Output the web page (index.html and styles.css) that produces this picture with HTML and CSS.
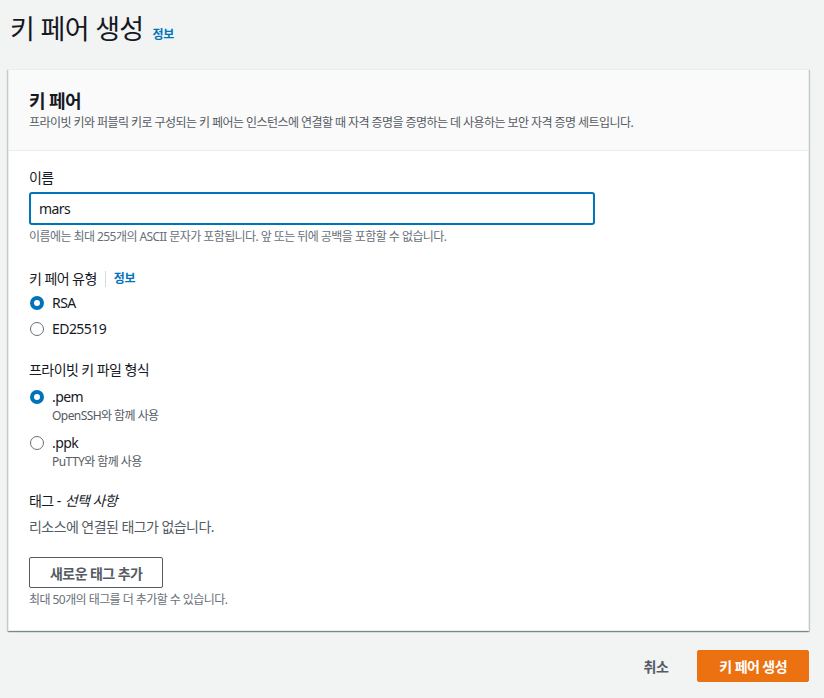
FILE: index.html
```html
<!DOCTYPE html>
<html lang="ko">
<head>
<meta charset="utf-8">
<link rel="stylesheet" href="styles.css">
</head>
<body>
<div class="page">
  <h1 class="page-title">키 페어 생성 <a class="info" href="#">정보</a></h1>
  <div class="card">
    <div class="card-header">
      <h2 class="card-title">키 페어</h2>
      <p class="card-desc">프라이빗 키와 퍼블릭 키로 구성되는 키 페어는 인스턴스에 연결할 때 자격 증명을 증명하는 데 사용하는 보안 자격 증명 세트입니다.</p>
    </div>
    <div class="card-body">
      <div class="field">
        <div class="label">이름</div>
        <div class="input">mars</div>
        <div class="hint">이름에는 최대 255개의 ASCII 문자가 포함됩니다. 앞 또는 뒤에 공백을 포함할 수 없습니다.</div>
      </div>
      <div class="field type-field">
        <div class="label">키 페어 유형<span class="sep"></span><a class="info" href="#">정보</a></div>
        <div class="radio-group">
          <div class="radio"><span class="dot on"></span><span class="rtext">RSA</span></div>
          <div class="radio"><span class="dot"></span><span class="rtext">ED25519</span></div>
        </div>
      </div>
      <div class="field format-field">
        <div class="label">프라이빗 키 파일 형식</div>
        <div class="radio-group desc-group">
          <div class="radio"><span class="dot on"></span><div><div class="rtext">.pem</div><div class="rdesc">OpenSSH와 함께 사용</div></div></div>
          <div class="radio"><span class="dot"></span><div><div class="rtext">.ppk</div><div class="rdesc">PuTTY와 함께 사용</div></div></div>
        </div>
      </div>
      <div class="field tags">
        <div class="label">태그 - <i>선택 사항</i></div>
        <div class="empty">리소스에 연결된 태그가 없습니다.</div>
        <button class="btn-normal">새로운 태그 추가</button>
        <div class="hint">최대 50개의 태그를 더 추가할 수 있습니다.</div>
      </div>
    </div>
  </div>
  <div class="actions">
    <button class="btn-link">취소</button>
    <button class="btn-primary">키 페어 생성</button>
  </div>
</div>
</body>
</html>
```
FILE: styles.css
```css
* { box-sizing: border-box; }
html, body { margin: 0; padding: 0; }
body {
  background: #f2f3f3;
  color: #16191f;
  font-family: "Noto Sans", "Noto Sans CJK KR", sans-serif;
  font-size: 14px;
  line-height: 22px;
  letter-spacing: -0.04em;
}
.page { padding: 0 15px 0 8px; width: 824px; }
.page-title {
  margin: 0;
  padding: 12px 0 0 2px;
  height: 69px;
  font-size: 27px;
  font-weight: 400;
  line-height: 34px;
  letter-spacing: -0.025em;
  display: flex;
  align-items: baseline;
  gap: 9px;
}
.page-title .info { font-size: 12px; }
.info {
  color: #0073bb;
  font-size: 12px;
  font-weight: 700;
  text-decoration: none;
  letter-spacing: -0.02em;
}
.card {
  background: #fff;
  border: 1px solid #eaeded;
  box-shadow: 0 1px 1px 0 rgba(0,28,36,0.3), 1px 1px 1px 0 rgba(0,28,36,0.15), -1px 1px 1px 0 rgba(0,28,36,0.15);
  width: 801px;
}
.card-header {
  background: #fafafa;
  border-bottom: 1px solid #eaeded;
  padding: 19px 20px 19px;
}
.card-title {
  margin: 0;
  font-size: 18px;
  font-weight: 700;
  line-height: 24px;
}
.card-desc {
  margin: 2px 0 0;
  font-size: 12px;
  line-height: 16px;
  color: #545b64;
}
.card-body { padding: 16px 20px 22px; }
.field + .field { margin-top: 20px; }
.field.type-field { margin-top: 23px; }
.field.format-field { margin-top: 17px; }
.label { display: flex; align-items: center; line-height: 22px; }
.sep {
  display: inline-block;
  width: 1px;
  height: 16px;
  background: #d5dbdb;
  margin: 0 8px 0 8px;
}
.input {
  margin-top: 3px;
  width: 566px;
  height: 33px;
  border: 2px solid #0073bb;
  border-radius: 3px;
  padding: 0 8px;
  line-height: 29px;
  font-size: 14px;
}
.hint {
  margin-top: 4px;
  font-size: 12px;
  line-height: 16px;
  color: #687078;
}
.radio-group { display: flex; flex-direction: column; }
.desc-group { gap: 4px; margin-top: 3px; }
.radio { display: flex; align-items: flex-start; padding: 2px 0; }
.dot {
  flex: none;
  width: 14px;
  height: 14px;
  margin: 4px 8px 0 1px;
  border: 1px solid #687078;
  border-radius: 50%;
  background: #fff;
}
.dot.on { border: 4px solid #0073bb; }
.rtext { line-height: 22px; }
.rdesc { font-size: 12px; line-height: 16px; color: #545b64; }
.tags { margin-top: 18px !important; }
.tags i { margin-left: 4px; }
.empty { margin-top: 4px; color: #545b64; }
.btn-normal {
  display: block;
  margin-top: 19px;
  height: 31px;
  padding: 0 20px;
  border: 1px solid #545b64;
  border-radius: 2px;
  background: #fff;
  color: #545b64;
  font-family: inherit;
  font-size: 14px;
  font-weight: 700;
  letter-spacing: -0.04em;
}
.tags .hint { margin-top: 4px; }
.actions {
  width: 801px;
  display: flex;
  justify-content: flex-end;
  align-items: center;
  margin-top: 19px;
  gap: 29px;
}
.btn-link {
  background: none;
  border: 0;
  padding: 0;
  color: #545b64;
  font-family: inherit;
  font-size: 14px;
  font-weight: 700;
  letter-spacing: -0.04em;
}
.btn-primary {
  height: 32px;
  padding: 0 21px;
  background: #ec7211;
  border: 1px solid #ec7211;
  border-radius: 2px;
  color: #fff;
  font-family: inherit;
  font-size: 14px;
  font-weight: 700;
  letter-spacing: -0.04em;
}
```
